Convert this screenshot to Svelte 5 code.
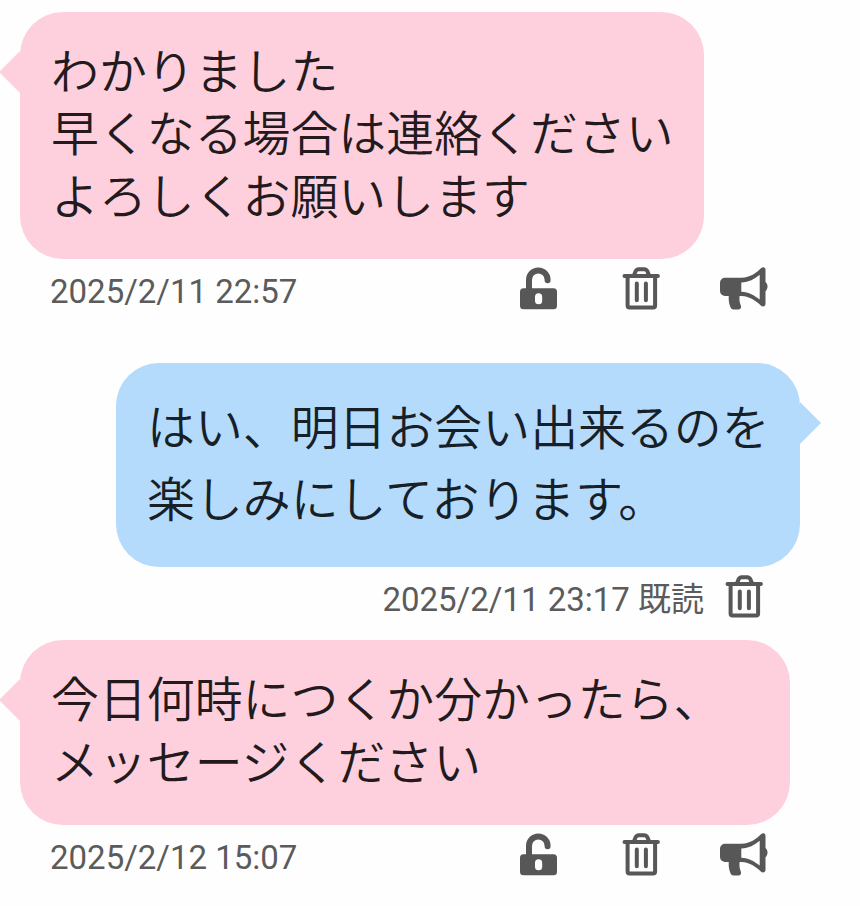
<script lang="ts">
  type Message = {
    own: boolean;
    lines: string[];
    time: string;
    read?: boolean;
    wide?: boolean;
  };

  const messages: Message[] = [
    {
      own: false,
      lines: ["わかりました", "早くなる場合は連絡ください", "よろしくお願いします"],
      time: "2025/2/11 22:57",
    },
    {
      own: true,
      lines: ["はい、明日お会い出来るのを", "楽しみにしております。"],
      time: "2025/2/11 23:17",
      read: true,
    },
    {
      own: false,
      lines: ["今日何時につくか分かったら、", "メッセージください"],
      time: "2025/2/12 15:07",
      wide: true,
    },
  ];
</script>

{#snippet lock()}
  <svg class="icon" viewBox="0 0 48 44">
    <path class="thick" d="M14 23V12.8a9.3 9.3 0 0 1 18.6 0v.5" />
    <path
      class="fill"
      fill-rule="evenodd"
      d="M8.5 21.3h30a3.5 3.5 0 0 1 3.5 3.5v14a3.5 3.5 0 0 1-3.5 3.5h-30A3.5 3.5 0 0 1 5 38.8v-14a3.5 3.5 0 0 1 3.5-3.5zM23.6 26.3a3.6 3.6 0 0 0-3.6 3.6v3.8a3.6 3.6 0 0 0 7.2 0v-3.8a3.6 3.6 0 0 0-3.6-3.6z"
    />
  </svg>
{/snippet}

{#snippet trash()}
  <svg class="icon" viewBox="0 0 48 44">
    <path class="line" d="M7.5 9.1h33.4M10.6 9.5v29q0 1.900 1.900 1.900h23.700q1.900 0 1.900-1.900V9.500" />
    <path class="line" d="M16.900 8.500l1.600-4q1-2.300 3.200-2.300h5.600q2.200 0 3.200 2.300l1.600 4" />
    <path class="line" d="M19.800 16.500v16.800M28.900 16.500v16.800" />
  </svg>
{/snippet}

{#snippet megaphone()}
  <svg class="icon" viewBox="0 0 48 44">
    <path
      class="fill"
      fill-rule="evenodd"
      d="M5 10.700h16.500C30.500 10.500 36 6 41 1.300c2-1.800 4.500-1 4.500 1.500v12.200c2.700 2 2.700 7.200 0 9.200v12.500c0 2.800-2.700 3.500-4.700 1.800C35.500 33.500 30 29.700 21.500 29.100H19.600c-.5 4 .1 6.500 1.200 9.400.8 2.300-.3 3.900-2.300 3.900h-4.700c-2 0-2.900-.8-3.500-2.600-1.200-3.500-1.900-7-1.500-10.800H5a5 5 0 0 1-5-5V15.700a5 5 0 0 1 5-5zM21.300 15.500v9.200c7.700.5 13 3.500 18.400 7.900V7.800c-5.400 4.500-10.700 7.300-18.400 7.700z"
    />
  </svg>
{/snippet}

<main class="thread">
  {#each messages as message}
    <article class="message" class:own={message.own}>
      <div class="bubble" class:wide={message.wide}>
        {#each message.lines as line}
          <p>{line}</p>
        {/each}
      </div>
      <footer class="meta">
        <span class="time">{message.time}{#if message.read}&nbsp;既読{/if}</span>
        <div class="actions">
          {#if !message.own}{@render lock()}{/if}
          {@render trash()}
          {#if !message.own}{@render megaphone()}{/if}
        </div>
      </footer>
    </article>
  {/each}
</main>

<style>
  :global(body) {
    margin: 0;
    background: #fefefe;
  }

  .thread {
    box-sizing: border-box;
    width: 860px;
    height: 906px;
    padding: 12px 60px 0 20px;
    overflow: hidden;
    font-family: Roboto, "Noto Sans CJK JP", sans-serif;
  }

  .message {
    display: flex;
    flex-direction: column;
    align-items: flex-start;
    margin-bottom: 44px;
  }

  .message.own {
    align-items: flex-end;
    margin-bottom: 13px;
  }

  .bubble {
    position: relative;
    box-sizing: border-box;
    width: 684px;
    padding: 30px 29px 30px 31px;
    border-radius: 43px;
    background: #fed0dd;
    color: #231a1e;
    font-size: 47.9px;
    font-weight: 350;
    line-height: 62.4px;
  }

  .bubble.wide {
    width: 770px;
  }

  .own .bubble {
    background: #b4dafc;
    color: #172027;
    line-height: 72px;
  }

  .bubble::before {
    content: "";
    position: absolute;
    top: 39px;
    left: -21px;
    border: 21px solid transparent;
    border-left-width: 0;
    border-right-color: #fed0dd;
  }

  .own .bubble::before {
    left: auto;
    right: -21px;
    border-right-width: 0;
    border-left: 21px solid #b4dafc;
  }

  p {
    margin: 0;
    white-space: nowrap;
  }

  .meta {
    display: flex;
    box-sizing: border-box;
    width: 780px;
    height: 60px;
    padding: 8px 32px 0 30px;
    justify-content: space-between;
  }

  .own .meta {
    justify-content: flex-end;
    gap: 16px;
  }

  .time {
    color: #5b5b5b;
    font-size: 33px;
    line-height: 49px;
    white-space: nowrap;
  }

  .actions {
    display: flex;
    gap: 54.5px;
  }

  .icon {
    width: 48px;
    height: 44px;
    overflow: visible;
  }

  .icon:nth-child(2) {
    margin: 0 0.5px 0 -0.5px;
  }

  .fill {
    fill: #575757;
  }

  .line,
  .thick {
    fill: none;
    stroke: #575757;
    stroke-width: 4;
    stroke-linecap: round;
  }

  .thick {
    stroke-width: 6;
  }
</style>
